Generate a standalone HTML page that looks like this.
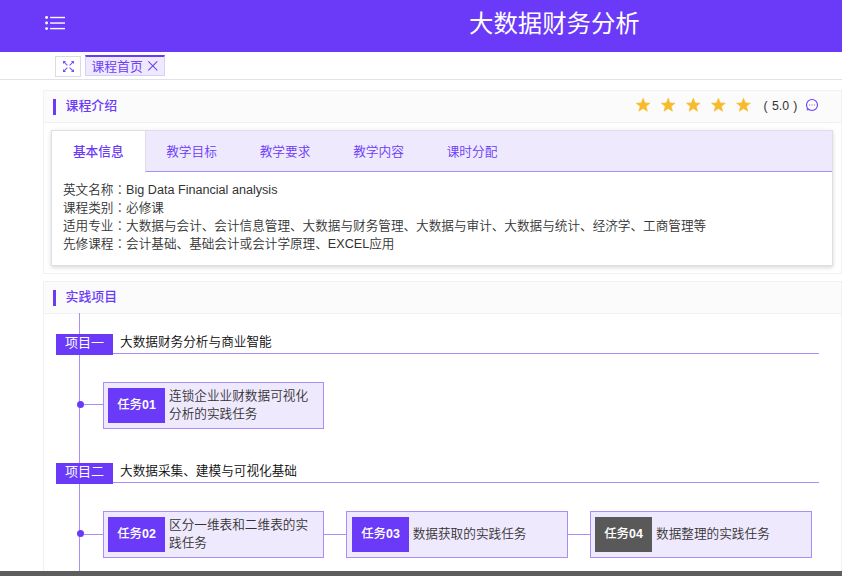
<!DOCTYPE html>
<html lang="zh-CN">
<head>
<meta charset="utf-8">
<title>大数据财务分析</title>
<style>
*{box-sizing:border-box;margin:0;padding:0}
html,body{width:842px;height:576px;overflow:hidden;background:#fff}
body{position:relative;font-family:"Liberation Sans","Noto Sans CJK SC",sans-serif;font-size:12.65px;color:#333;font-weight:350}
.abs{position:absolute}
#hdr{left:0;top:0;width:842px;height:52px;background:#6a3af8}
#title{left:469px;top:0;height:48px;line-height:48px;font-size:24.4px;color:#fff;white-space:nowrap;font-weight:400}
#tabbar{left:0;top:52px;width:842px;height:28px;background:#fff;border-bottom:1px solid #dfe2e8}
#expand{left:55px;top:56px;width:26px;height:21px;border:1px solid #d8dce5;background:#fff}
#hometab{left:85px;top:55px;width:80px;height:21px;background:#efe9fe;border:1px solid #d9cdfb;border-top:2px solid #6a3af8;color:#6d3ff8;font-weight:400;font-size:12.8px;line-height:19.5px;white-space:nowrap;padding-left:5.5px}
.panel{left:43px;width:799px;border:1px solid #f1f1f1;background:#fff}
.phead{left:0;top:0;width:797px;height:32px;background:#fbfbfb;border-bottom:1px solid #f1f1f1}
.pbar{left:9px;top:8px;width:3px;height:16px;background:#6a3af8}
.ptitle{left:21.5px;top:0;line-height:30.8px;font-weight:500;color:#6a3af8;font-size:12.9px;white-space:nowrap}
#card{left:51px;top:130px;width:782px;height:136px;border:1px solid #dcdfe6;background:#fff;box-shadow:0 2px 4px 0 rgba(0,0,0,.12),0 0 6px 0 rgba(0,0,0,.04)}
#cardhead{left:0;top:0;width:780px;height:41px;background:#efe9fe;border-bottom:1px solid #a98df9}
.tab{top:0;height:41px;line-height:43px;color:#6a3af8;white-space:nowrap;font-size:12.7px}
#tab1{left:0;width:94px;height:42px;background:#fff;border-right:1px solid #dcdfe6;font-weight:500;text-align:left;padding-left:20.9px}
.txt{left:63px;white-space:nowrap;line-height:18px;color:#333;font-size:12.62px}
.tc{font-family:"Noto Sans CJK TC",sans-serif}
.vline{left:79px;top:313px;width:1px;height:263px;background:#a98df9}
.proj{left:56px;width:763px;height:20px;border-bottom:1px solid #a98df9}
.plabel{left:0;top:0;width:57px;height:21px;background:#6a3af8;color:#fff;font-weight:400;font-size:13px;line-height:17px;text-align:center;white-space:nowrap}
.pname{left:64px;top:-2px;line-height:20px;color:#0a0a0a;white-space:nowrap}
.task{width:221px;height:47px;border:1px solid #a98df9;background:#efe9fe}
.tlabel{left:4px;top:5px;width:57px;height:35px;background:#6a3af8;color:#fff;font-weight:500;font-size:12.4px;line-height:34px;text-align:center;white-space:nowrap}
.ttext{left:65px;top:3.5px;width:150px;line-height:18px;color:#333}
.dot{left:77px;width:7px;height:7px;border-radius:50%;background:#6a3af8}
.conn{height:1px;background:#a98df9}
#bottom{left:0;top:571px;width:842px;height:5px;background:#5e5e5e}
</style>
</head>
<body>
<div id="hdr" class="abs"></div>
<svg class="abs" style="left:44px;top:14px" width="24" height="18" viewBox="0 0 24 18">
<g fill="#fff"><circle cx="2.6" cy="3.5" r="1.45"/><circle cx="2.6" cy="9.05" r="1.45"/><circle cx="2.6" cy="14.6" r="1.45"/>
<rect x="6.1" y="2.8" width="14.9" height="1.4"/><rect x="6.1" y="8.35" width="14.9" height="1.4"/><rect x="6.1" y="13.9" width="14.9" height="1.4"/></g></svg>
<div id="title" class="abs">大数据财务分析</div>
<div id="tabbar" class="abs"></div>
<div id="expand" class="abs"></div>
<svg class="abs" style="left:62px;top:60px" width="13" height="13" viewBox="0 0 13 13" fill="#7a50f8" stroke="#7a50f8" stroke-width="1.1"><path d="M1.6 1.6L5.4 5.4M11.4 1.6L7.6 5.4M1.6 11.4L5.4 7.6M11.4 11.4L7.6 7.6" fill="none"/><path stroke="none" d="M1 1H4.1L1 4.1ZM12 1H8.9L12 4.1ZM1 12H4.1L1 8.9ZM12 12H8.9L12 8.9Z"/></svg>
<div id="hometab" class="abs">课程首页</div>
<svg class="abs" style="left:146.5px;top:59.6px" width="12" height="12" viewBox="0 0 12 12" fill="none" stroke="#6d3ff8" stroke-width="1.05"><path d="M1.3 1.3L10.3 10.3M10.3 1.3L1.3 10.3"/></svg>

<div class="abs panel" style="top:90px;height:184px">
  <div class="abs phead"></div><div class="abs pbar"></div><div class="abs ptitle">课程介绍</div>
</div>
<svg class="abs" style="left:630.9px;top:94px" width="130" height="24" viewBox="630 94 130 24" fill="#f7ba2a" stroke="#f7ba2a" stroke-width="0.6" stroke-linejoin="round"><polygon transform="translate(642.1,105.4)" points="0.00,-7.20 1.82,-2.51 6.85,-2.22 2.95,0.96 4.23,5.82 0.00,3.10 -4.23,5.82 -2.95,0.96 -6.85,-2.22 -1.82,-2.51"/><polygon transform="translate(667.2,105.4)" points="0.00,-7.20 1.82,-2.51 6.85,-2.22 2.95,0.96 4.23,5.82 0.00,3.10 -4.23,5.82 -2.95,0.96 -6.85,-2.22 -1.82,-2.51"/><polygon transform="translate(692.3,105.4)" points="0.00,-7.20 1.82,-2.51 6.85,-2.22 2.95,0.96 4.23,5.82 0.00,3.10 -4.23,5.82 -2.95,0.96 -6.85,-2.22 -1.82,-2.51"/><polygon transform="translate(717.4,105.4)" points="0.00,-7.20 1.82,-2.51 6.85,-2.22 2.95,0.96 4.23,5.82 0.00,3.10 -4.23,5.82 -2.95,0.96 -6.85,-2.22 -1.82,-2.51"/><polygon transform="translate(742.5,105.4)" points="0.00,-7.20 1.82,-2.51 6.85,-2.22 2.95,0.96 4.23,5.82 0.00,3.10 -4.23,5.82 -2.95,0.96 -6.85,-2.22 -1.82,-2.51"/></svg>
<div class="abs" style="left:763.6px;top:96.5px;line-height:18px;color:#333;white-space:nowrap;word-spacing:0.8px;font-size:12.3px">( 5.0 )</div>
<svg class="abs" style="left:805px;top:98px" width="14" height="14" viewBox="0 0 14 14" fill="none" stroke="#6a3af8" stroke-width="1.1"><circle cx="7" cy="7" r="5.5"/><path d="M2.4 10.4L2 12L3.8 11.7" stroke-width="0.9"/><g fill="#6a3af8" stroke="none" opacity=".6"><circle cx="4.6" cy="7" r=".65"/><circle cx="7" cy="7" r=".65"/><circle cx="9.4" cy="7" r=".65"/></g></svg>

<div id="card" class="abs">
  <div id="cardhead" class="abs"></div>
  <div id="tab1" class="abs tab">基本信息</div>
  <div class="abs tab" style="left:114.2px">教学目标</div>
  <div class="abs tab" style="left:207.7px">教学要求</div>
  <div class="abs tab" style="left:301.2px">教学内容</div>
  <div class="abs tab" style="left:394.7px">课时分配</div>
</div>
<div class="abs txt" style="top:180px">英文名称<span class="tc" lang="zh-TW">：</span>Big Data Financial analysis</div>
<div class="abs txt" style="top:198px">课程类别<span class="tc" lang="zh-TW">：</span>必修课</div>
<div class="abs txt" style="top:216px">适用专业<span class="tc" lang="zh-TW">：</span>大数据与会计、会计信息管理、大数据与财务管理、大数据与审计、大数据与统计、经济学、工商管理等</div>
<div class="abs txt" style="top:234px">先修课程<span class="tc" lang="zh-TW">：</span>会计基础、基础会计或会计学原理、EXCEL应用</div>

<div class="abs panel" style="top:281px;height:300px">
  <div class="abs phead"></div><div class="abs pbar"></div><div class="abs ptitle">实践项目</div>
</div>

<div class="abs vline"></div>
<div class="abs proj" style="top:334px"><div class="abs plabel">项目一</div><div class="abs pname">大数据财务分析与商业智能</div></div>
<div class="abs proj" style="top:463px"><div class="abs plabel">项目二</div><div class="abs pname">大数据采集、建模与可视化基础</div></div>

<div class="abs dot" style="top:401px"></div>
<div class="abs conn" style="left:84px;top:404px;width:19px"></div>
<div class="abs task" style="left:103px;top:382px"><div class="abs tlabel">任务<b>01</b></div><div class="abs ttext">连锁企业业财数据可视化分析的实践任务</div></div>

<div class="abs dot" style="top:530px"></div>
<div class="abs conn" style="left:84px;top:534px;width:507px"></div>
<div class="abs task" style="left:103px;top:511px"><div class="abs tlabel">任务<b>02</b></div><div class="abs ttext">区分一维表和二维表的实践任务</div></div>
<div class="abs task" style="left:346px;top:511px;width:222px"><div class="abs tlabel" style="left:5px">任务<b>03</b></div><div class="abs ttext" style="top:13px;left:65.7px">数据获取的实践任务</div></div>
<div class="abs task" style="left:590px;top:511px;width:222px"><div class="abs tlabel" style="background:#595959">任务<b>04</b></div><div class="abs ttext" style="top:13px">数据整理的实践任务</div></div>

<div id="bottom" class="abs"></div>
</body>
</html>
